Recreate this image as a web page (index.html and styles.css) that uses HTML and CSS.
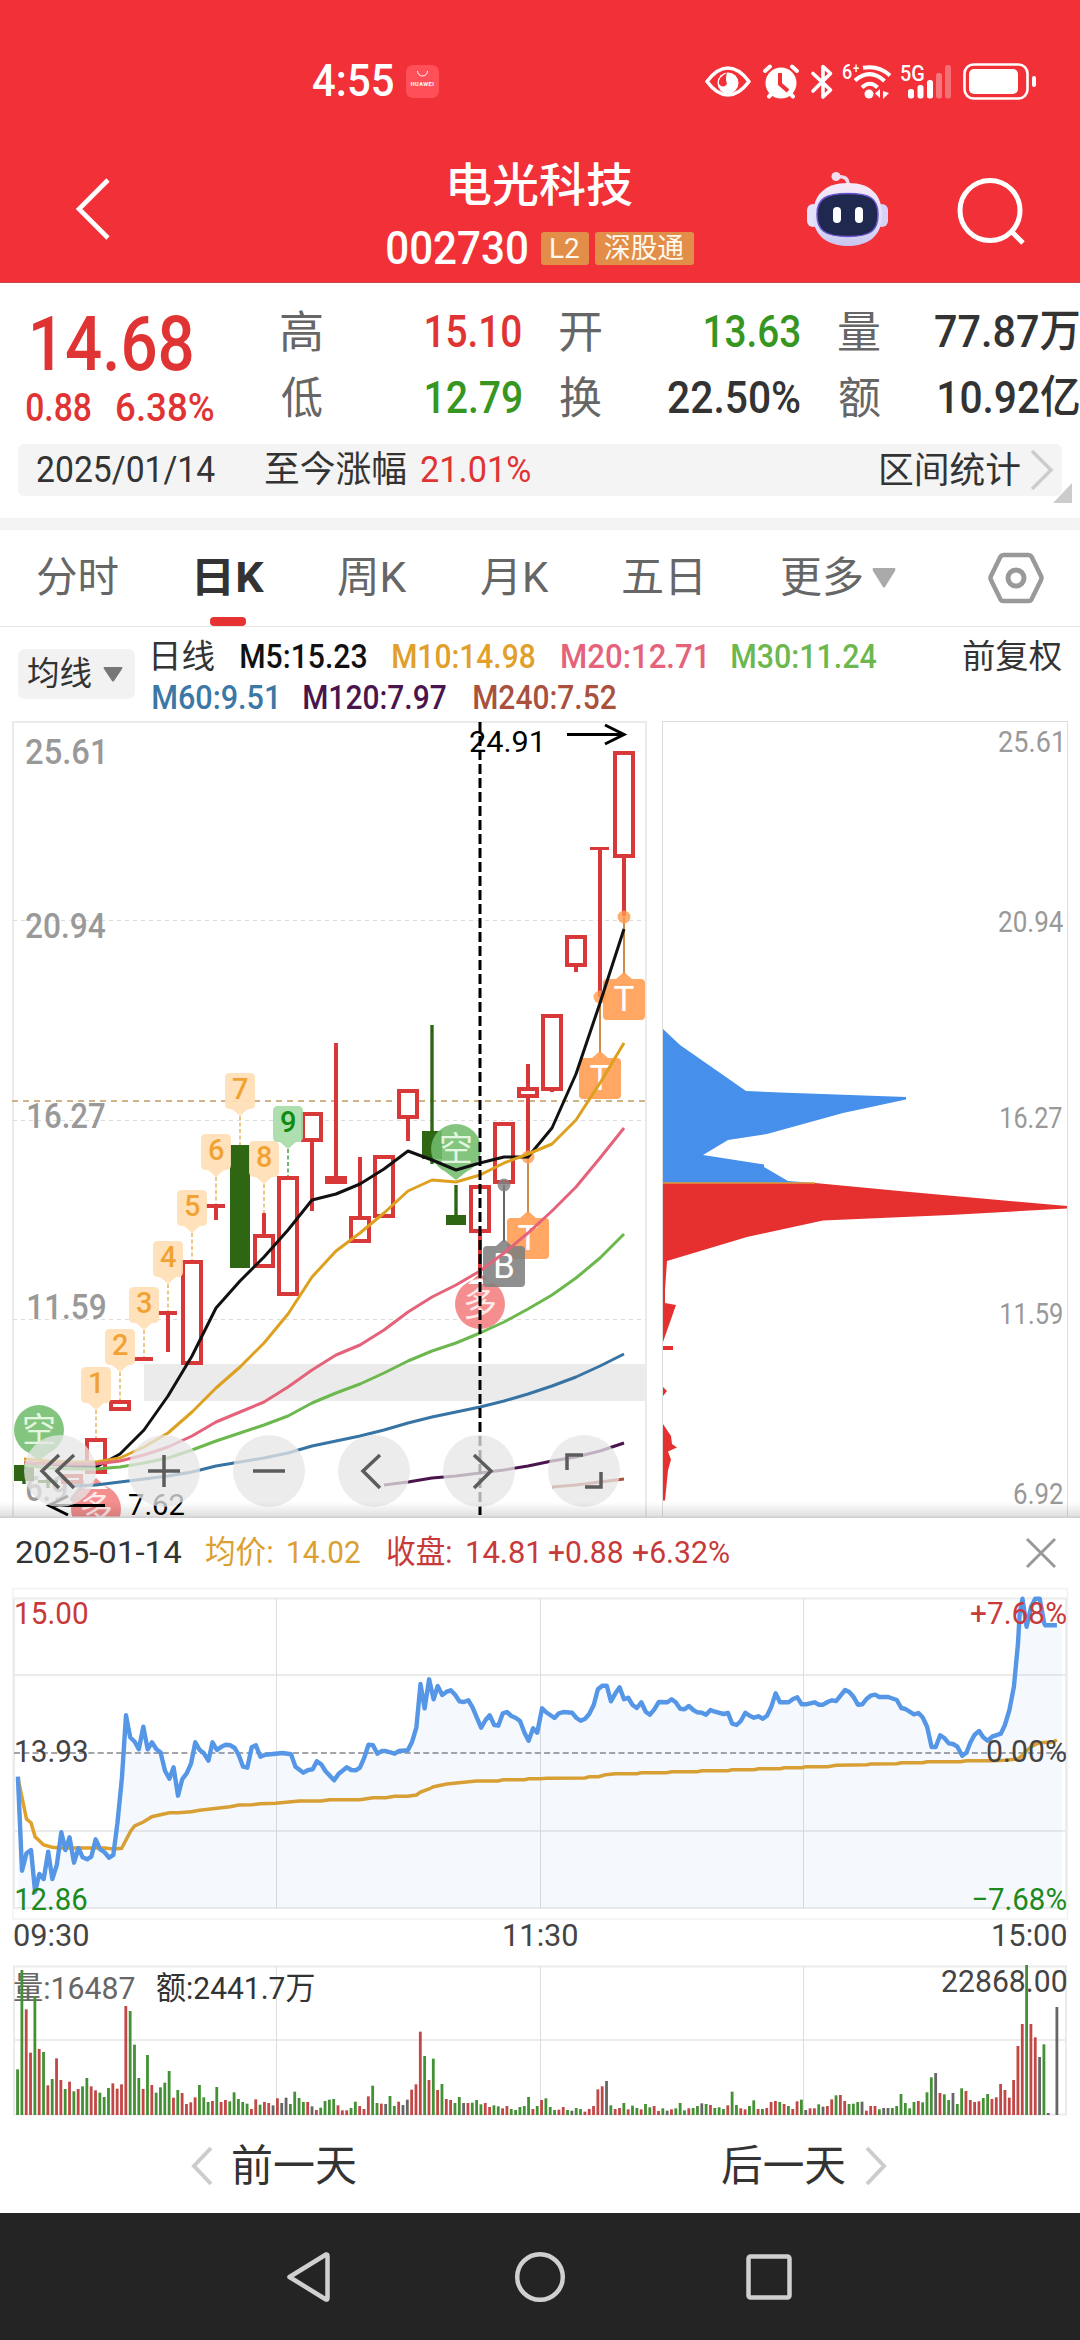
FILE: index.html
```html
<!DOCTYPE html>
<html lang="zh-CN">
<head>
<meta charset="utf-8">
<title>电光科技 002730</title>
<link rel="stylesheet" href="styles.css">
</head>
<body>
<div class="phone">
  <header class="header">
    <div class="status">
      <span class="clock" data-w="80">4:55</span>
      <span class="app-icon">
        <svg width="33" height="33" viewBox="0 0 33 33"><path d="M11.5 6a5 5 0 0 0 10 0" fill="none" stroke="#fff" stroke-width="1"/><text x="16.5" y="21" class="huawei">HUAWEI</text></svg>
      </span>
      <svg class="status-icons" width="345" height="50" viewBox="700 55 345 50">
        <g fill="none" stroke="#fff" stroke-linecap="round" stroke-linejoin="round">
          <path stroke-width="3.6" d="M707 80.500Q717 67 728 67T749 80.500Q739 94 728 94T707 80.500Z"/>
          <path stroke-width="4" d="M765 70l5-4.500M797 70l-5-4.500M769 95.500l4-4M793 95.500l-4-4"/>
          <path stroke-width="3.600" d="M813 72.500L830.500 89 823 96V65.500l7.500 7L813 90"/>
          <path stroke-width="4" stroke-linecap="butt" d="M863 66.800Q879 64 890 74.500M855 79.500Q870 66.500 884.500 80M862 86.500Q870 79 877.500 86.500"/>
          <rect x="964.500" y="63.500" width="63" height="34" rx="9" stroke-width="2.600"/>
        </g>
        <g fill="#fff">
          <circle cx="728" cy="82" r="10.500"/><circle cx="781" cy="82" r="15.500"/>
          <circle cx="869" cy="93" r="4.500"/><path d="M880 88v9l-5-4.500zM883 90v8l6-6z"/>
          <rect x="908" y="88" width="6" height="9.500" rx="2.500"/><rect x="917.500" y="84" width="6" height="13.500" rx="2.500"/><rect x="927" y="79" width="6" height="18.500" rx="2.500"/>
          <rect x="936" y="72" width="6" height="25.500" rx="2.500" opacity=".35"/><rect x="945" y="64" width="6" height="33.500" rx="2.500" opacity=".3"/>
          <rect x="969" y="68" width="49" height="25" rx="5"/><rect x="1032" y="75" width="4" height="11" rx="2"/>
        </g>
        <path d="M727 72q-9 4-8 11 4 5 8 0-2-5 0-11z" fill="#f13037"/>
        <path d="M780 72v11l8 7" fill="none" stroke="#f13037" stroke-width="4"/>
        <text class="mini" data-x0="843" data-x1="852" y="78" font-size="20">6</text>
        <text class="mini" data-x0="853" data-x1="859" y="72" font-size="15">+</text>
        <text class="mini" data-x0="901" data-x1="924" y="80" font-size="22">5G</text>
      </svg>
    </div>
    <div class="nav">
      <svg class="back" width="40" height="70" viewBox="73 174 40 70"><path d="M108 180L79 209l29 29" fill="none" stroke="#fff" stroke-width="4.600"/></svg>
      <div class="title">
        <h1><span data-w="182">电光科技</span></h1>
        <div class="code-row">
          <span class="code" data-w="140">002730</span>
          <span class="tag tag-l2"><span data-w="28">L2</span></span>
          <span class="tag"><span data-w="79">深股通</span></span>
        </div>
      </div>
      <div class="actions">
        <svg width="84" height="80" viewBox="806 170 84 80">
          <defs><linearGradient id="shell" x1="0" y1="0" x2="0" y2="1"><stop offset="0" stop-color="#f7e9f8"/><stop offset=".7" stop-color="#dcdcf8"/><stop offset="1" stop-color="#c9c4ee"/></linearGradient></defs>
          <path d="M837 177q11-2 11 8" fill="none" stroke="#efd9ec" stroke-width="3.500"/><circle cx="836" cy="176.500" r="4.500" fill="#f3dcef"/>
          <rect x="807" y="204" width="12" height="23" rx="6" fill="#e4e2fa"/><rect x="876" y="204" width="12" height="23" rx="6" fill="#d7d2f5"/>
          <path d="M848 183c24 0 34 13 34 32 0 21-14 31-34 31s-35-10-35-31c0-19 11-32 35-32z" fill="url(#shell)"/>
          <path d="M848 193.500c22 0 30 5 30 21s-7 22-30 22-31-6-31-22 9-21 31-21z" fill="#1f2950" stroke="#6a55cf" stroke-width="1.500"/>
          <rect x="833" y="207" width="8" height="16" rx="4" fill="#fff"/><rect x="855" y="207" width="8" height="16" rx="4" fill="#fff"/>
        </svg>
        <svg width="72" height="72" viewBox="956 176 72 72"><circle cx="990" cy="210.500" r="30" fill="none" stroke="#fff" stroke-width="5"/><path d="M1011 231l12 12" stroke="#fff" stroke-width="5"/></svg>
      </div>
    </div>
  </header>

  <section class="quote">
    <div class="price-block red">
      <div class="price"><span data-w="159">14.68</span></div>
      <div class="change"><span data-w="65">0.88</span><span data-w="96">6.38%</span></div>
    </div>
    <dl class="stats">
      <div><dt data-w="41">高</dt><dd class="red" data-w="95">15.10</dd></div>
      <div><dt data-w="41">开</dt><dd class="green" data-w="95">13.63</dd></div>
      <div><dt data-w="41">量</dt><dd data-w="144">77.87万</dd></div>
      <div><dt data-w="41">低</dt><dd class="green" data-w="95">12.79</dd></div>
      <div><dt data-w="41">换</dt><dd data-w="132">22.50%</dd></div>
      <div><dt data-w="41">额</dt><dd data-w="140">10.92亿</dd></div>
    </dl>
  </section>

  <section class="range">
    <span data-w="178">2025/01/14</span>
    <span class="since" data-w="141">至今涨幅</span>
    <span class="red pct" data-w="109">21.01%</span>
    <span class="interval" data-w="139">区间统计</span>
    <svg width="24" height="44" viewBox="0 0 24 44"><path d="M2 3l19 19L2 41" fill="none" stroke="#ccc" stroke-width="3.500"/></svg>
    <svg class="corner" width="19" height="20" viewBox="0 0 19 20"><path d="M19 0v20H0z" fill="#ccc"/></svg>
  </section>

  <nav class="tabs">
    <span class="tab"><span data-w="81">分时</span></span>
    <span class="tab active"><span data-w="67">日K</span></span>
    <span class="tab"><span data-w="69">周K</span></span>
    <span class="tab"><span data-w="68">月K</span></span>
    <span class="tab"><span data-w="77">五日</span></span>
    <span class="tab more"><span data-w="81">更多</span></span>
    <svg class="tri" width="26" height="22" viewBox="0 0 26 22"><path d="M2 1h22q1 1 0 3L14 20q-1 1-2 0L2 4Q1 2 2 1z" fill="#aaa"/></svg>
    <svg class="hex" width="58" height="56" viewBox="0 0 58 56"><path d="M16.500 5h25q2 0 3 1.500L54 26q1 2 0 4L44.500 49.500q-1 1.500-3 1.500h-25q-2 0-3-1.500L4 30q-1-2 0-4L13.500 6.500q1-1.500 3-1.500z" fill="none" stroke="#999" stroke-width="4.500"/><circle cx="29" cy="28" r="8" fill="none" stroke="#999" stroke-width="5"/></svg>
  </nav>

  <section class="legend">
    <button class="ma-btn"><span data-w="63">均线</span><svg width="20" height="15" viewBox="0 0 20 15"><path d="M1 0h18q1 1 0 2L11 14q-1 1-2 0L1 2Q0 1 1 0z" fill="#777"/></svg></button>
    <div class="ma-list">
      <div class="ma-row"><span class="dark" data-w="61">日线</span><span class="m5" data-w="125">M5:15.23</span><span class="m10" data-w="142">M10:14.98</span><span class="m20" data-w="143">M20:12.71</span><span class="m30" data-w="144">M30:11.24</span><span class="adjust dark" data-w="98">前复权</span></div>
      <div class="ma-row second"><span class="m60" data-w="123">M60:9.51</span><span class="m120" data-w="142">M120:7.97</span><span class="m240" data-w="142">M240:7.52</span></div>
    </div>
  </section>

  <section class="charts">
    <svg width="1080" height="798" viewBox="0 720 1080 798">
      <defs><linearGradient id="shade" x1="0" y1="0" x2="0" y2="1"><stop offset="0" stop-color="#000" stop-opacity="0"/><stop offset="1" stop-color="#000" stop-opacity=".13"/></linearGradient></defs>
      <path d="M13 1518V722H646V1518" fill="none" stroke="#ebebeb" stroke-width="2"/>
      <path d="M13 920.500H646M13 1120.500H646M13 1319.500H646" stroke="#ddd" stroke-width="1" stroke-dasharray="4 4"/>
      <rect x="144" y="1364" width="502" height="37" fill="#ebebeb"/>
      <path d="M12 1101H646" stroke="#c09a63" stroke-width="1.500" stroke-dasharray="6 5"/>
      <g class="axis" font-size="35">
        <text data-x0="26" data-x1="103" y="764">25.61</text>
        <text data-x0="26" data-x1="106" y="938">20.94</text>
        <text data-x0="28" data-x1="105" y="1128">16.27</text>
        <text data-x0="28" data-x1="105" y="1319">11.59</text>
        <text data-x0="26" data-x1="85" y="1501">6.92</text>
      </g>
      <g id="candles"></g>
      <g id="signals"></g>
      <g id="averages" fill="none" stroke-width="3" stroke-linejoin="round"></g>
      <path d="M480 722V1515" stroke="#000" stroke-width="3" stroke-dasharray="10 4"/>
      <g fill="none" stroke="#000" stroke-width="3"><path d="M567 734.500h57M605 725l19 9.500-19 9.500M105 1505.500H49M68 1496l-19 9.500 19 9.500"/></g>
      <text class="plain" data-x0="470" data-x1="540" y="752" font-size="30">24.91</text>
      <text class="plain" data-x0="129" data-x1="184" y="1515.500" font-size="30">7.62</text>
      <g fill="#e6e6e6" fill-opacity=".76"><circle cx="60" cy="1471" r="36"/><circle cx="164" cy="1471" r="36"/><circle cx="269" cy="1471" r="36"/><circle cx="374" cy="1471" r="36"/><circle cx="479" cy="1471" r="36"/><circle cx="584" cy="1471" r="36"/></g>
      <path d="M59 1455l-17 16 17 17M74 1455l-17 16 17 17M148 1471h32M164 1455v32M253 1471h32M380 1455l-17 16 17 17M474 1455l17 16-17 17M567 1470v-15h16M601 1472v15h-16" fill="none" stroke="#5c5c5c" stroke-width="3.500"/>

      <path d="M662.500 1518V721.500H1067.500V1518" fill="none" stroke="#ddd"/>
      <path fill="#4690eb" d="M663 1029L680 1045 746 1091 780 1092.500 906 1097V1099.500L843 1113 767 1134 728 1140 703 1155 764 1164.500V1167L788 1181 815 1183H663z"/>
      <path fill="#e63030" d="M663 1183H815L910 1192 1067 1206V1208.500L950 1215 823 1220.500 747 1237 667 1261 665 1290V1303L676 1305 663 1342zM663 1346h10v4h-10zM663 1387l4 4-4 5zM663 1424l8 12 1 8 5 3.500-9 4 3 8-3 11-3 30h-2z"/>
      <path d="M663 1183H815" stroke="#e59a35" stroke-width="1.500"/>
      <g class="axis light" font-size="29.500">
        <text data-x0="999" data-x1="1061" y="752.500">25.61</text>
        <text data-x0="999" data-x1="1063" y="932.500">20.94</text>
        <text data-x0="1001" data-x1="1062" y="1128.500">16.27</text>
        <text data-x0="1001" data-x1="1062" y="1324.500">11.59</text>
        <text data-x0="1014" data-x1="1063" y="1504.500">6.92</text>
      </g>
      <rect x="0" y="1502" width="1080" height="15" fill="url(#shade)"/><rect x="0" y="1516.500" width="1080" height="1.500" fill="#d0d0d0"/>
    </svg>
  </section>

  <section class="day">
    <div class="day-head">
      <span data-w="165">2025-01-14</span>
      <span class="gold k1" data-w="66">均价:</span><span class="gold v1" data-w="72">14.02</span>
      <span class="crimson k2" data-w="64">收盘:</span><span class="crimson v1" data-w="70">14.81</span><span class="crimson v2" data-w="73">+0.88</span><span class="crimson v3" data-w="96">+6.32%</span>
      <svg class="close" width="32" height="32" viewBox="0 0 32 32"><path d="M2 2l28 28M30 2L2 30" stroke="#999" stroke-width="3"/></svg>
    </div>
    <svg width="1080" height="330" viewBox="0 1588 1080 330" class="day-chart">
      <path d="M13 1588.500H1067.500V1919H13z" fill="none" stroke="#f2f2f2" stroke-width="1.500"/>
      <path d="M14 1598.500H1066V1908H14zM14 1675H1066M14 1831H1066" fill="none" stroke="#ebebeb" stroke-width="2"/>
      <path d="M276.500 1598V1908M540.500 1598V1908M803.500 1598V1908" stroke="#ddd"/>
      <path d="M14 1753H1066" stroke="#a3a3a8" stroke-width="2" stroke-dasharray="6 3.300"/>
      <path id="avg" fill="none" stroke="#e0a02a" stroke-width="3.500"/>
      <path id="area" fill="#4690eb" fill-opacity=".055"/>
      <path id="price" fill="none" stroke="#5596e6" stroke-width="4.400" stroke-linejoin="round"/>
      <g font-size="31.500">
        <text fill="#c83a3a" data-x0="16" data-x1="87" y="1624">15.00</text>
        <text fill="#444" data-x0="16" data-x1="87" y="1762">13.93</text>
        <text fill="#1c8a1c" data-x0="16" data-x1="87" y="1910">12.86</text>
        <text fill="#c83a3a" data-x0="971" data-x1="1066" y="1624">+7.68%</text>
        <text fill="#444" data-x0="987" data-x1="1066" y="1762">0.00%</text>
        <text fill="#1c8a1c" data-x0="973" data-x1="1066" y="1910">−7.68%</text>
      </g>
    </svg>
    <div class="times"><span data-w="74">09:30</span><span data-w="73">11:30</span><span data-w="73">15:00</span></div>
    <svg width="1080" height="151" viewBox="0 1965 1080 151" class="vol-chart">
      <path d="M14 1966.500H1066V2114.500H14zM14 2040H1066" fill="none" stroke="#ebebeb" stroke-width="2"/>
      <path d="M276.500 1966V2115M540.500 1966V2115M803.500 1966V2115" stroke="#ddd"/>
      <g font-size="31.500">
        <text fill="#666" data-x0="14" data-x1="135" y="1999">量:16487</text>
        <text fill="#333" data-x0="157" data-x1="314" y="1999">额:2441.7万</text>
        <text fill="#444" data-x0="942" data-x1="1066" y="1992">22868.00</text>
      </g>
      <g id="volume"></g>
    </svg>
    <div class="pager">
      <svg width="24" height="42" viewBox="0 0 24 42"><path d="M21 3L4 21l17 18" fill="none" stroke="#ccc" stroke-width="4"/></svg>
      <span data-w="123">前一天</span>
      <span class="next" data-w="123">后一天</span>
      <svg width="24" height="42" viewBox="0 0 24 42"><path d="M3 3l17 18L3 39" fill="none" stroke="#ccc" stroke-width="4"/></svg>
    </div>
  </section>

  <footer class="system-nav">
    <svg width="520" height="60" viewBox="280 2247 520 60" fill="none" stroke="#d0d0d0" stroke-width="4.500" stroke-linejoin="round"><path d="M289.500 2277L326 2254.500Q327.500 2254 327.500 2256V2298Q327.500 2300 326 2299.500z"/><circle cx="540" cy="2277" r="22.800"/><rect x="748.500" y="2256.500" width="41" height="41" rx="2"/></svg>
  </footer>
</div>
<script src="chart.js"></script>
</body>
</html>
```
FILE: styles.css
```css
* { box-sizing: border-box; }
body { margin: 0; background: #fff; font-family: Roboto, "Noto Sans CJK SC", sans-serif; color: #333; }
svg { display: block; flex: none; }
[data-w] { display: block; flex: none; white-space: nowrap; transform-origin: 0 50%; }
.phone { width: 1080px; height: 2340px; overflow: hidden; display: flex; flex-direction: column; }
.phone > * { flex: none; }
.red { color: #e03434; }
.green { color: #37961f; }
.dark { color: #333; }

.header { height: 283px; background: #f13037; color: #fff; border-bottom: 1px solid #c9474b; }
.status { height: 150px; padding: 12px 35px 0 313px; display: flex; align-items: center; }
.clock { font-size: 45px; line-height: 50px; font-weight: 500; }
.app-icon { width: 33px; height: 33px; margin-left: 13px; border-radius: 7px; background: #ff5059; }
.huawei { font-size: 5.5px; font-weight: 700; fill: #fff; text-anchor: middle; letter-spacing: .5px; }
.status-icons { margin-left: auto; }
.mini { fill: #fff; font-weight: 500; }
.nav { display: flex; align-items: flex-start; height: 132px; }
.back { margin: 24px 0 0 73px; }
.title { width: 307px; margin: 8px 0 0 274px; display: flex; flex-direction: column; align-items: center; }
h1 { margin: 0; font-size: 46px; line-height: 54px; font-weight: 500; }
.code-row { width: 307px; display: flex; align-items: center; margin-top: 11px; }
.code { font-size: 46px; line-height: 50px; font-weight: 500; }
.tag { height: 33px; width: 99px; margin-left: 6px; padding-left: 10px; border-radius: 3px; background: #e28e48; font-size: 28px; line-height: 34px; color: #fff8ee; }
.tag-l2 { width: 48px; margin-left: 14px; }
.actions { display: flex; margin: 20px 0 0 112px; gap: 66px; }
.actions svg + svg { margin-top: 6px; }

.quote { display: flex; height: 161px; }
.price-block { width: 281px; padding-top: 25px; }
.price { font-size: 76px; line-height: 72px; font-weight: 500; padding-left: 33px; }
.change { display: flex; gap: 26px; padding-left: 26px; font-size: 39px; line-height: 57px; font-weight: 500; }
.stats { margin: 0; padding-top: 16px; display: grid; grid-template-columns: repeat(3, 240px); grid-auto-rows: 66px; column-gap: 39px; font-size: 45px; line-height: 66px; }
.stats > div { display: flex; justify-content: space-between; }
.stats dt { color: #666; font-size: 44px; line-height: 68px; }
.stats dd { margin: 0; font-weight: 500; }

.range { position: relative; height: 52px; margin: 0 18px; padding: 0 8px 0 19px; border-radius: 6px; background: #f4f4f4; display: flex; align-items: center; font-size: 36px; line-height: 52px; }
.since { margin-left: 50px; }
.pct { margin-left: 15px; }
.interval { margin: 2px 10px 0 auto; }
.corner { position: absolute; right: -10px; bottom: -7px; }

.tabs { margin-top: 22px; height: 109px; border-top: 12px solid #f4f4f4; border-bottom: 1px solid #e6e6e6; padding-left: 37px; display: flex; align-items: center; font-size: 42px; line-height: 96px; color: #666; }
.tab + .tab { margin-left: 74px; }
.tabs .active.active { margin-left: 79px; font-weight: 700; color: #333; position: relative; }
.active::after { content: ""; position: absolute; left: 13px; bottom: 0; width: 36px; height: 9px; border-radius: 4px; background: #e63232; }
.tabs .more.more { margin-left: 81px; }
.tri { margin-left: 9px; }
.hex { margin-left: 90px; }

.legend { height: 93px; padding-left: 18px; display: flex; font-size: 33px; line-height: 41px; font-weight: 500; }
.ma-btn { width: 117px; height: 50px; margin: 22px 0 0; padding: 0 0 0 10px; border: 0; border-radius: 7px; background: #f2f2f2; display: flex; align-items: center; gap: 12px; font: 400 33px/50px Roboto, "Noto Sans CJK SC", sans-serif; color: #333; }
.ma-list { margin-left: 18px; padding-top: 9px; }
.ma-row { display: flex; gap: 27px; }
.ma-row .dark { font-weight: 400; }
.ma-row .adjust { margin-left: 60px; }
.second { gap: 28px; }
.m5 { color: #111; } .m10 { color: #e0a02a; } .m20 { color: #e5637a; } .m30 { color: #6cb84e; }
.m60 { color: #3c78a5; } .m120 { color: #4a144d; } .m240 { color: #a9513d; }

.charts { height: 798px; }
.axis { fill: #999; font-weight: 500; }
.axis.light { font-weight: 400; }
.plain { fill: #000; }
.tag-num { font-size: 29px; font-weight: 500; }

.day { height: 695px; }
.day-head { height: 70px; padding: 0 23px 0 16px; display: flex; align-items: center; font-size: 31.5px; line-height: 72px; }
.gold { color: #dba032; } .crimson { color: #c83a3a; }
.k1 { margin-left: 25px; } .v1 { margin-left: 16px; } .k2 { margin-left: 27px; } .v2 { margin-left: 12px; } .v3 { margin-left: 11px; }
.close { margin-left: auto; }
.day-chart { overflow: visible; }
.times { height: 47px; padding: 0 14px; display: flex; justify-content: space-between; font-size: 31.5px; line-height: 35px; color: #444; }
.pager { height: 98px; padding-left: 190px; display: flex; align-items: center; font-size: 43px; line-height: 98px; }
.pager svg { margin-top: 2px; }
.pager [data-w] { margin: 2px 0 0 19px; }
.pager .next { margin: 2px 19px 0 366px; }

.system-nav { height: 127px; padding: 34px 0 0 280px; background: #242424; }
```
FILE: chart.js
```js
const NS = 'http://www.w3.org/2000/svg';
const ctx = document.createElement('canvas').getContext('2d');

// Ink extents of a string in the font its element uses.
function ink(el) {
  const cs = getComputedStyle(el);
  ctx.font = `${cs.fontWeight} ${cs.fontSize} ${cs.fontFamily}`;
  const m = ctx.measureText(el.textContent);
  return { left: -m.actualBoundingBoxLeft, width: m.actualBoundingBoxLeft + m.actualBoundingBoxRight };
}

function add(parent, tag, attrs, text) {
  const el = document.createElementNS(NS, tag);
  for (const k in attrs) el.setAttribute(k, attrs[k]);
  if (text) el.textContent = text;
  document.getElementById(parent).appendChild(el);
  return el;
}

// Candles: x, body top, body bottom, high, low, kind (r hollow red, g solid green, t flat red)
const candles = [
  [24,1465,1481,1465,1484,'g'],[48,1480,1483,1477,1488,'g'],[72,1474,1484,1474,1484,'r'],[96,1438,1474,1438,1474,'r'],
  [120,1400,1411,1400,1411,'r'],[144,1357,1361,1357,1361,'t'],[168,1311,1315,1311,1352,'t'],[192,1260,1365,1260,1365,'r'],
  [216,1204,1208,1204,1220,'t'],[240,1145,1268,1145,1268,'g'],[264,1234,1268,1213,1268,'r'],[288,1176,1296,1176,1296,'r'],
  [312,1112,1142,1112,1211,'r'],[336,1176,1184,1043,1184,'r'],[360,1216,1243,1157,1243,'r'],[384,1155,1218,1155,1218,'r'],
  [408,1089,1119,1089,1141,'r'],[432,1131,1159,1025,1164,'g'],[456,1215,1225,1185,1225,'g'],[480,1185,1233,1185,1275,'r'],
  [504,1122,1184,1122,1184,'r'],[528,1087,1098,1064,1157,'r'],[552,1014,1091,1014,1092,'r'],[576,935,967,935,972,'r'],
  [600,847,850,847,997,'t'],[624,751,858,751,916,'r']
];
for (const [x, t, b, hi, lo, k] of candles) {
  const c = k === 'g' ? '#2f6614' : '#d93838';
  const ww = k === 'g' ? 3.4 : 4;
  if (hi < t) add('candles', 'rect', { x: x - ww / 2, y: hi, width: ww, height: t - hi, fill: c });
  if (lo > b) add('candles', 'rect', { x: x - ww / 2, y: b, width: ww, height: lo - b, fill: c });
  if (k === 'r') add('candles', 'rect', { x: x - 9, y: t + 2, width: 18, height: b - t - 4, fill: '#fff', stroke: c, 'stroke-width': 4 });
  else add('candles', 'rect', { x: x - 10, y: t, width: k === 'g' ? 20 : 19, height: b - t, fill: c });
}

// Round long/short signals
for (const [x, y, up, ch] of [[456,1149,0,'空'],[39,1430,0,'空'],[480,1304,1,'多'],[96,1509,1,'多']]) {
  const c = up ? '#f47e7e' : '#72bd6c';
  const tip = up ? `M${x - 12} ${y - 20}L${x} ${y - 31}L${x + 12} ${y - 20}z` : `M${x - 14} ${y + 20}L${x} ${y + 31}L${x + 14} ${y + 20}z`;
  add('signals', 'path', { d: `${tip}M${x - 25} ${y}a25 25 0 1 0 50 0a25 25 0 1 0 -50 0z`, fill: c, opacity: .88 });
  add('signals', 'text', { x: x - 17, y: y + 12, 'font-size': 34, fill: up ? '#ffe9e9' : '#e2f6e0' }, ch);
}

// Nine-count tags: count, x, top, end of its dashed stem
for (const [n, x, y, end] of [[1,96,1367,1438],[2,120,1329,1400],[3,144,1287,1357],[4,168,1241,1311],[5,192,1190,1260],[6,216,1134,1204],[7,240,1073,1145],[8,264,1141,1213],[9,288,1106,1176]]) {
  const g = n === 9;
  add('signals', 'path', { d: `M${x} ${y + 43}V${end}`, stroke: g ? '#6fb56f' : '#ecc98b', 'stroke-width': 2, 'stroke-dasharray': '4 2.5' });
  add('signals', 'path', { d: `M${x - 10} ${y}h20q5 0 5 5v26q0 5-5 5h-2l-8 7-8-7h-2q-5 0-5-5v-26q0-5 5-5z`, fill: g ? '#a5dba6' : '#ffdfb5', 'fill-opacity': .9 });
  add('signals', 'text', { class: 'tag-num', x: x - 8, y: y + 26, fill: g ? '#118a11' : '#f2a233' }, String(n));
}

// Trade tags: letter, x, anchor y, box top
for (const [ch, x, a, y] of [['T',624,917,979],['T',600,997,1058],['T',528,1157,1218],['B',504,1185,1246]]) {
  const c = ch === 'B' ? '#808080' : '#ff9b4d';
  add('signals', 'path', { d: `M${x} ${a}V${y - 4}`, stroke: ch === 'B' ? '#666' : '#cf8c48', 'stroke-width': 2 });
  add('signals', 'circle', { cx: x, cy: a, r: 6.5, fill: c, opacity: .8 });
  add('signals', 'path', { d: `M${x - 8} ${y}l8-7 8 7h9q4 0 4 4v33q0 4-4 4h-34q-4 0-4-4v-33q0-4 4-4z`, fill: c, 'fill-opacity': .88 });
  add('signals', 'text', { x, y: y + 32, 'text-anchor': 'middle', 'font-size': 35, fill: '#fff' }, ch);
}

// Moving averages, one value every 24 units
const averages = [
  ['#111', 24, [1463,1464,1466,1467,1454,1430,1396,1356,1308,1281,1257,1230,1200,1194,1184,1169,1151,1160,1170,1163,1157,1157,1128,1074,1003,929]],
  ['#dda01f', 24, [1459,1461,1462,1462,1458,1447,1433,1412,1388,1367,1343,1314,1277,1251,1233,1213,1191,1180,1182,1175,1163,1154,1144,1120,1083,1043]],
  ['#e5637a', 24, [1463,1464,1464,1464,1461,1455,1447,1436,1422,1412,1402,1387,1370,1355,1345,1330,1312,1297,1285,1271,1253,1233,1211,1187,1158,1128]],
  ['#6cb84e', 24, [1465,1468,1469,1469,1467,1463,1458,1450,1441,1433,1425,1416,1403,1393,1384,1373,1361,1351,1343,1333,1322,1309,1295,1278,1258,1234]],
  ['#3874a3', 72, [1486,1485,1482,1479,1476,1472,1466,1462,1458,1453,1446,1441,1436,1430,1423,1417,1412,1407,1401,1394,1386,1377,1366,1354]],
  ['#4a144d', 384, [1485,1482,1478,1476,1473,1470,1466,1461,1457,1451,1443]],
  ['#ad523e', 552, [1487,1485,1482,1479]]
];
for (const [stroke, x0, ys] of averages)
  add('averages', 'polyline', { stroke, points: ys.map((y, i) => `${x0 + i * 24},${y}`).join(' ') });

// Intraday series; the session is stored in two halves with a shared unit grid
const halves = (a, b) => [a, b].flatMap((s, h) => s.trim().split(/\s+/).map(p => {
  const [x, y] = p.split(',').map(Number);
  return [(h * 540 + x / 2.9037).toFixed(1), (1510 + y / 3).toFixed(1)];
}));
const price = halves(
  `52,800 64,1082 77,1030 90,1020 102,1145 114,1092 127,1107 140,1025 152,1107 165,1065 178,967 190,1020 202,982 215,1058 228,1014 240,1042 253,1048 265,1040 278,988 291,1018 303,1026 317,1043 329,1035 341,940 354,805 366,616 378,682 391,695 403,718 416,650 429,718 441,697 454,718 466,727 479,782 492,806 504,772 517,857 529,808 542,790 555,760 567,697 580,720 592,730 605,752 617,697 630,720 643,710 655,704 668,706 681,713 693,735 706,770 718,773 731,712 743,706 756,740 770,734 800,731 820,729 845,733 858,770 881,788 895,780 908,778 920,754 933,763 945,783 970,811 983,792 1007,772 1020,780 1033,781 1045,773 1058,742 1070,704 1083,706 1096,731 1108,723 1120,723 1146,731 1158,723 1184,721 1196,697 1209,652 1221,522 1233,595 1246,508 1259,568 1271,528 1284,555 1297,545 1309,541 1322,555 1334,574 1347,576 1360,571 1372,592 1397,653 1410,630 1422,616 1435,645 1447,647 1460,610 1472,606 1485,618 1498,624 1510,633 1523,668 1535,692 1548,655 1560,668`,
  `6,595 18,607 42,624 55,610 68,606 93,608 106,624 118,632 131,626 143,612 156,585 168,538 181,527 194,527 206,574 219,550 231,532 244,568 256,563 268,584 281,594 294,577 307,605 319,614 332,598 345,576 370,577 382,568 394,577 407,596 420,598 432,588 445,600 457,607 470,608 482,614 495,600 508,605 533,612 546,609 558,641 571,645 583,633 596,608 609,617 621,623 634,619 647,626 659,617 671,592 684,550 697,577 722,577 735,567 747,562 760,583 772,583 797,577 810,584 822,584 835,576 848,571 860,573 873,556 886,540 898,546 910,560 923,584 936,583 948,567 960,557 973,554 985,561 1011,561 1036,570 1049,594 1061,597 1086,613 1099,609 1111,622 1124,650 1137,711 1149,711 1162,676 1174,684 1187,700 1199,702 1212,710 1226,737 1238,728 1250,697 1262,674 1275,663 1287,682 1300,692 1313,680 1338,671 1350,645 1363,600 1376,530 1388,400 1393,310 1401,266 1413,350 1426,290 1438,266 1451,266 1464,340 1467,346 1501,346`);
const avg = halves(
  `52,803 77,927 90,938 102,980 115,993 127,1005 152,1012 178,1014 303,1014 329,1017 353,1015 366,990 380,962 391,948 416,936 441,920 466,914 492,908 517,908 555,905 580,901 630,895 668,890 693,885 731,884 756,881 800,880 869,873 932,873 957,869 1045,869 1083,863 1120,863 1146,859 1184,859 1209,855 1221,846 1246,837 1259,830 1297,822 1347,817 1384,813 1447,813 1460,809 1523,809 1535,806`,
  `0,806 20,805 130,804 143,800 170,800 190,794 219,791 281,791 294,788 368,788 382,785 457,785 470,782 546,782 558,779 621,779 634,776 697,776 709,773 760,773 772,770 835,770 860,766 950,764 960,762 1036,761 1050,758 1111,758 1124,755 1220,755 1238,752 1313,752 1350,751 1388,747 1401,735 1413,722 1426,710 1438,704 1451,698 1489,696 1501,690`);
const line = pts => 'M' + pts.map(p => p.join(' ')).join('L');
document.getElementById('price').setAttribute('d', line(price));
document.getElementById('avg').setAttribute('d', line(avg));
document.getElementById('area').setAttribute('d', line(price) + 'H1062V1908H18z');

// Volume per minute pair: colour letter + height (k = unchanged)
const volume = [
  [0, 'g137 g435 r317 r187 g357 r198 g189 r89 g108 r170 r105 g78 r100 g71 r78 g86 g111 r86 r74 g67 g54 g81 r95 r79 r92 r327 g312 g211 g111 r78 g180 r90 g67 g83 g97 g132 r52 g75 r66 r33 r38 r53 g90 g53 g39 r42 g84 r39 r45 g41 g68 g48 g39 g34 r18 r47 g31 r39 r36 k29 r50 k36 k52 g33 g70 g51 g39 r39 k26 r15 g22 g42 g46 g48 r29 r14 r14 g21 g40 r27 r18 r56 g88 g36 r34 k33 g57 g27 r40 k30 k46 r76 r92 r250 g177 r105 g169 r75 g93 r48 r45 g36 g54 k36 r36 g37 g45 g32 r36 r24 g29 g26 r20 r27 g18 g15 g24 g27 g54 r18 g27'],
  [121, 'r45 g50 g24 g15 r16 r24 g15 k13 g21 g18 r10 r18 r27 r77 r86 k102 g29 r18 r21 g36 r17 g28 g21 r17 g33 g23 r27 r12 g20 k13 r17 g20 g36 g14 r20 g21 g27 k35 g33 r30 g21 g23 g18 r29 g70 g30 r20 r17 g27 g44 r18 g18 r21 r39 r42 g39 r33 g27 r18 r41 g46 k15 r20 r20 g32 k25 r27 r47 g59 r60 r42 g33 g34 g39 k40 r13 r27 r27 g17 k21 k21 g21 g27 g63 g36 g20 g39 r42 g38 g68 g113 k126 r66 g62 g45 k66 g33 g80 r72 r45 r39 r41 g51 g63 r48 r53 r93 r75 r52 r105 r207 r273 g450 r273 r233 k174 g212 k6 k0 k324']
];
const hue = { g: '#449034', r: '#c24747', k: '#666' };
for (const [start, s] of volume) s.split(' ').forEach((v, i) => {
  const h = v.slice(1) / 3;
  add('volume', 'rect', { x: (17.56 + (start + i) * 4.3306 - 1.4).toFixed(2), y: 2115 - h, width: 2.8, height: h, fill: hue[v[0]] });
});

// Fit each label's ink to the width reserved for it
document.querySelectorAll('[data-w]').forEach(el => {
  const w = +el.dataset.w, m = ink(el), s = w / m.width;
  el.style.width = w + 'px';
  el.style.transform = `translateX(${-m.left * s}px) scaleX(${s})`;
});
document.querySelectorAll('text[data-x0]').forEach(el => {
  const a = +el.dataset.x0, b = +el.dataset.x1, m = ink(el), s = (b - a) / m.width;
  el.setAttribute('transform', `translate(${a - m.left * s} 0) scale(${s} 1)`);
});
```
